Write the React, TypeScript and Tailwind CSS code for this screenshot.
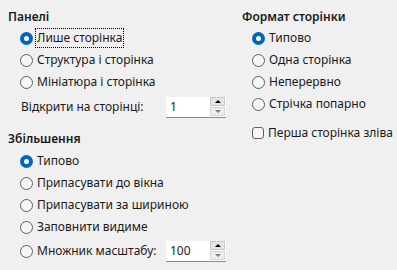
import React from "react";

const font = { fontFamily: '"Noto Sans", "Segoe UI", sans-serif' };

function Radio({ checked }: { checked?: boolean }) {
  if (checked)
    return (
      <span className="w-[13px] h-[13px] rounded-full bg-[#0067c0] flex items-center justify-center shrink-0">
        <span className="w-[5px] h-[5px] rounded-full bg-white" />
      </span>
    );
  return <span className="w-[13px] h-[13px] rounded-full border border-[#5f5f5f] bg-[#f6f6f6] shrink-0" />;
}

function RadioRow({ label, checked, focus }: { label: string; checked?: boolean; focus?: boolean }) {
  return (
    <div className="h-[22px] flex items-center gap-[3px]">
      <Radio checked={checked} />
      <span className={focus ? "outline outline-1 outline-dotted outline-black px-[1px]" : "px-[1px]"}>{label}</span>
    </div>
  );
}

function Spin({ value }: { value: string }) {
  return (
    <div className="w-[60px] h-[21px] bg-white border-b border-[#8a8a8a] flex items-center justify-between pl-[4px] pr-[1px]">
      <span className="text-[12px]">{value}</span>
      <div className="flex flex-col w-[15px] gap-[1px]">
        <div className="h-[9px] bg-[#e6e6e6] border border-[#c8c8c8] flex items-center justify-center">
          <span className="w-0 h-0 border-l-[3px] border-r-[3px] border-b-[3px] border-l-transparent border-r-transparent border-b-black" />
        </div>
        <div className="h-[9px] bg-[#eeeeee] border border-[#d6d6d6] flex items-center justify-center">
          <span className="w-0 h-0 border-l-[3px] border-r-[3px] border-t-[3px] border-l-transparent border-r-transparent border-t-[#808080]" />
        </div>
      </div>
    </div>
  );
}

export default function App() {
  return (
    <div className="w-[397px] h-[270px] bg-[#f0f0f0] text-[12px] text-[#1a1a1a] flex" style={font}>
      {/* Left column */}
      <div className="w-[234px] pl-[8px] pt-[9px]">
        <div className="h-4 leading-4 font-semibold">Панелі</div>
        <div className="pl-[12px] mt-[2px]">
          <RadioRow label="Лише сторінка" checked focus />
          <RadioRow label="Структура і сторінка" />
          <RadioRow label="Мініатюра і сторінка" />
        </div>
        <div className="pl-[13px] mt-[3px] h-[22px] flex items-center">
          <span className="w-[145px]">Відкрити на сторінці:</span>
          <Spin value="1" />
        </div>

        <div className="h-4 leading-4 font-semibold mt-[13px]">Збільшення</div>
        <div className="pl-[12px] mt-[3px]">
          <RadioRow label="Типово" checked />
          <RadioRow label="Припасувати до вікна" />
          <RadioRow label="Припасувати за шириною" />
          <RadioRow label="Заповнити видиме" />
          <div className="h-[22px] mt-[2px] flex items-center">
            <div className="w-[146px] flex items-center gap-[3px]">
              <Radio />
              <span className="px-[1px]">Множник масштабу:</span>
            </div>
            <Spin value="100" />
          </div>
        </div>
      </div>

      {/* Right column */}
      <div className="pl-[8px] pt-[9px]">
        <div className="h-4 leading-4 font-semibold">Формат сторінки</div>
        <div className="pl-[10px] mt-[2px]">
          <RadioRow label="Типово" checked />
          <RadioRow label="Одна сторінка" />
          <RadioRow label="Неперервно" />
          <RadioRow label="Стрічка попарно" />
          <div className="h-[22px] mt-[7px] flex items-center gap-[4px]">
            <span className="w-[12px] h-[12px] rounded-[3px] border border-[#5f5f5f] bg-[#f6f6f6]" />
            <span>Перша сторінка зліва</span>
          </div>
        </div>
      </div>
    </div>
  );
}
